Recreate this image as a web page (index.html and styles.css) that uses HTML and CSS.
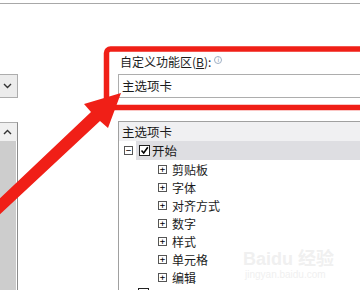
FILE: index.html
```html
<!DOCTYPE html>
<html lang="zh-CN">

<head>
    <meta charset="UTF-8">
    <meta name="viewport" content="width=device-width, initial-scale=1.0">
    <title>自定义功能区</title>
    <link rel="stylesheet" href="styles.css">
</head>

<body>
    <div class="page">
        <div class="topline"></div>

        <div class="main">
            <div class="left">
                <div class="combo">
                    <svg class="chev" width="9" height="6" viewBox="0 0 9 6">
                        <path d="M1 1 L4.5 4.5 L8 1" fill="none" stroke="#333" stroke-width="1.4" />
                    </svg>
                </div>
                <div class="list">
                    <div class="scroll-btn">
                        <svg width="9" height="6" viewBox="0 0 9 6">
                            <path d="M1 5 L4.5 1.5 L8 5" fill="none" stroke="#333" stroke-width="1.4" />
                        </svg>
                    </div>
                    <div class="track"></div>
                </div>
            </div>

            <div class="gap"></div>

            <div class="right">
                <div class="label">自定义功能区(<u>B</u>):<span class="info">i</span></div>
                <div class="field">主选项卡</div>

                <div class="tree">
                    <div class="tree-head">主选项卡</div>
                    <div class="row top">
                        <span class="toggle">−</span>
                        <div class="sel">
                            <span class="check">
                                <svg width="9" height="9" viewBox="0 0 9 9">
                                    <path d="M1.5 4.5 L3.7 7 L7.8 1.2" fill="none" stroke="#000" stroke-width="1.6" />
                                </svg>
                            </span>
                            <span>开始</span>
                        </div>
                    </div>
                    <div class="row child"><span class="toggle">+</span>剪贴板</div>
                    <div class="row child"><span class="toggle">+</span>字体</div>
                    <div class="row child"><span class="toggle">+</span>对齐方式</div>
                    <div class="row child"><span class="toggle">+</span>数字</div>
                    <div class="row child"><span class="toggle">+</span>样式</div>
                    <div class="row child"><span class="toggle">+</span>单元格</div>
                    <div class="row child"><span class="toggle">+</span>编辑</div>
                    <div class="row next"><span class="check"></span></div>
                </div>

                <div class="watermark">
                    <div class="wm-big">Baidu 经验</div>
                    <div class="wm-small">jingyan.baidu.com</div>
                </div>
            </div>
        </div>

        <!-- annotation drawn over the dialog -->
        <svg class="mark" width="360" height="290" viewBox="0 0 360 290">
            <rect x="106.5" y="49" width="300" height="58.5" rx="4" fill="none" stroke="#f01f17" stroke-width="5.5" />
            <polygon points="121,93 108,128 100,121 -5,219 -5,203 91,112 84,104" fill="#f01f17" />
        </svg>
    </div>
</body>

</html>
```

FILE: styles.css
```css
* {
    box-sizing: border-box;
}

body {
    margin: 0;
    background: #fff;
    font-family: "Noto Sans CJK SC", "Noto Sans", sans-serif;
    font-size: 12px;
    color: #1b1b1b;
}

.page {
    position: relative;
    width: 360px;
    height: 290px;
    overflow: hidden;
}

.topline {
    height: 4px;
    border-bottom: 1px solid #a8a8a8;
}

.main {
    display: grid;
    grid-template-columns: 18px 100px 242px;
    height: 286px;
}

/* left column */
.left {
    display: flex;
    flex-direction: column;
    padding-top: 70px;
}

.combo {
    height: 24px;
    border: 1px solid #adadad;
    border-left: none;
    background: #ececec;
    display: flex;
    align-items: center;
    justify-content: center;
    padding-right: 3px;
}

.list {
    margin-top: 24px;
    flex: 1;
    display: flex;
    flex-direction: column;
    border-top: 1px solid #adadad;
    border-right: 1px solid #8c8c8c;
}

.scroll-btn {
    height: 18px;
    display: flex;
    align-items: center;
    justify-content: center;
    background: #f0f0f0;
    padding-right: 2px;
}

.track {
    flex: 1;
    background: #cdcdcd;
    margin-right: 1px;
}

/* right column */
.right {
    position: relative;
    padding-top: 49px;
}

.label {
    height: 17px;
    line-height: 17px;
    padding-left: 2px;
    white-space: nowrap;
}

.info {
    display: inline-block;
    width: 8px;
    height: 8px;
    margin-left: 3px;
    border: 1px solid #9fb0c4;
    border-radius: 50%;
    color: #7d93ad;
    font-family: "DejaVu Sans", sans-serif;
    font-size: 6px;
    line-height: 6px;
    text-align: center;
    vertical-align: 5px;
}

.field {
    margin-top: 4px;
    height: 24px;
    border: 1px solid #adadad;
    border-right: none;
    padding-left: 3px;
    line-height: 21px;
    font-size: 12.5px;
}

.tree {
    margin-top: 23px;
    border-top: 1px solid #a0a0a0;
    border-left: 1px solid #a0a0a0;
    height: 200px;
}

.tree-head {
    height: 19px;
    line-height: 19px;
    padding-left: 3px;
    background: #f0f0f2;
    font-size: 12.5px;
}

.row {
    display: flex;
    align-items: center;
    height: 18px;
    white-space: nowrap;
}

.row.top {
    height: 19px;
    padding-left: 5px;
}

.row.next {
    align-items: flex-start;
    padding-left: 19px;
    padding-top: 2px;
}

.toggle {
    width: 9px;
    height: 9px;
    border: 1px solid #555;
    font-family: "DejaVu Sans Mono", monospace;
    font-size: 9px;
    line-height: 7px;
    text-align: center;
    color: #000;
    background: #fff;
    flex: none;
}

.row.child {
    padding-left: 39px;
}

.row.child .toggle {
    margin-right: 5px;
}

.sel {
    display: flex;
    align-items: center;
    margin-left: 3px;
    flex: 1;
    height: 100%;
    background: #dedee2;
    padding-left: 3px;
    font-size: 12.5px;
}

.check {
    width: 11px;
    height: 11px;
    border: 1px solid #222;
    background: #fff;
    display: flex;
    align-items: center;
    justify-content: center;
    margin-right: 2px;
    flex: none;
}

.watermark {
    position: absolute;
    left: 125px;
    top: 245px;
    color: #f0f0f0;
    font-family: "Liberation Sans", "Noto Sans CJK SC", sans-serif;
}

.wm-big {
    font-size: 18px;
    font-weight: bold;
    line-height: 20px;
}

.wm-small {
    font-size: 10px;
    line-height: 12px;
    padding-left: 2px;
}

/* red annotation */
.mark {
    position: absolute;
    left: 0;
    top: 0;
    pointer-events: none;
}
```
